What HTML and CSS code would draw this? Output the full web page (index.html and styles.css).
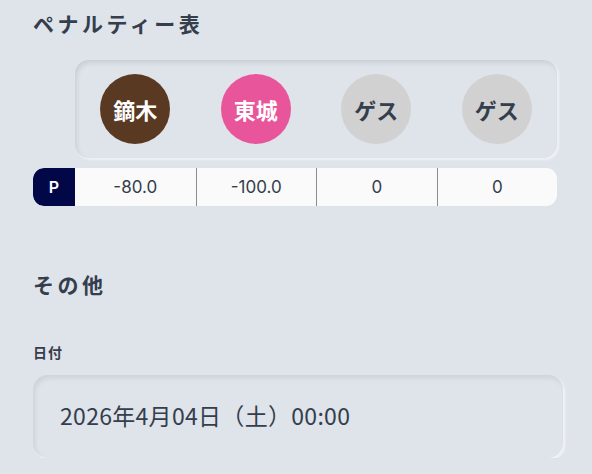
FILE: index.html
```html
<!DOCTYPE html>
<html lang="ja">
<head>
<meta charset="utf-8">
<link rel="stylesheet" href="styles.css">
</head>
<body>
<main class="page">
  <h2 class="section-title">ペナルティー表</h2>
  <div class="penalty">
    <div class="players">
      <div class="player"><span class="avatar avatar-brown">鏑木</span></div>
      <div class="player"><span class="avatar avatar-pink">東城</span></div>
      <div class="player"><span class="avatar avatar-guest">ゲス</span></div>
      <div class="player"><span class="avatar avatar-guest">ゲス</span></div>
    </div>
    <div class="score-row">
      <div class="score-label">P</div>
      <div class="score-cell">-80.0</div>
      <div class="score-cell">-100.0</div>
      <div class="score-cell">0</div>
      <div class="score-cell">0</div>
    </div>
  </div>
  <h2 class="section-title other-title">その他</h2>
  <label class="field-label">日付</label>
  <div class="date-field">2026年4月04日（土）00:00</div>
</main>
</body>
</html>
```

FILE: styles.css
```css
html, body {
  margin: 0;
  padding: 0;
  background: #dfe3ea;
}
body {
  font-family: "Noto Sans CJK JP", "Noto Sans", sans-serif;
  color: #343e4c;
}
.page {
  padding: 8px 0 0 33px;
}
.section-title {
  margin: 0;
  font-size: 21px;
  line-height: 30px;
  font-weight: 700;
  letter-spacing: 3.5px;
  color: #343e4c;
}
.penalty {
  width: 524px;
  margin-top: 22px;
}
.players {
  margin-left: 42px;
  display: grid;
  grid-template-columns: repeat(4, 1fr);
  padding: 14px 0;
  border-radius: 14px;
  background: #dfe3ea;
  box-shadow: inset 2px 3px 5px rgba(0, 0, 0, 0.09), 2px 2px 3px rgba(255, 255, 255, 0.55);
}
.player {
  display: flex;
  justify-content: center;
}
.avatar {
  width: 70px;
  height: 70px;
  border-radius: 50%;
  display: flex;
  align-items: center;
  justify-content: center;
  font-size: 22px;
  font-weight: 700;
  color: #ffffff;
}
.avatar-brown { background: #5a3922; }
.avatar-pink { background: #e9559a; }
.avatar-guest { background: #d1d1d1; color: #343e4c; }
.score-row {
  margin-top: 10px;
  display: grid;
  grid-template-columns: 42px repeat(4, 1fr);
  height: 38px;
  border-radius: 11px;
  overflow: hidden;
  background: #fafafa;
}
.score-label {
  background: #020748;
  color: #ffffff;
  font-family: Inter, "Noto Sans", sans-serif;
  font-weight: 600;
  font-size: 16px;
  display: flex;
  align-items: center;
  justify-content: center;
  border-radius: 11px 0 0 11px;
}
.score-cell {
  display: flex;
  align-items: center;
  justify-content: center;
  font-family: Inter, "Noto Sans", sans-serif;
  font-size: 17px;
  color: #343e4c;
}
.score-cell + .score-cell {
  border-left: 1px solid #8c8c8c;
}
.other-title {
  margin-top: 63px;
}
.field-label {
  display: block;
  margin-top: 43px;
  font-size: 14px;
  line-height: 20px;
  font-weight: 700;
  letter-spacing: 1px;
}
.date-field {
  margin-top: 13px;
  width: 530px;
  height: 83px;
  box-sizing: border-box;
  padding: 0 0 3px 27px;
  display: flex;
  align-items: center;
  border-radius: 15px;
  font-size: 23px;
  letter-spacing: 0.3px;
  color: #343e4c;
  box-shadow: inset 2px 3px 5px rgba(0, 0, 0, 0.08), 2px 2px 3px rgba(255, 255, 255, 0.6);
}
```
